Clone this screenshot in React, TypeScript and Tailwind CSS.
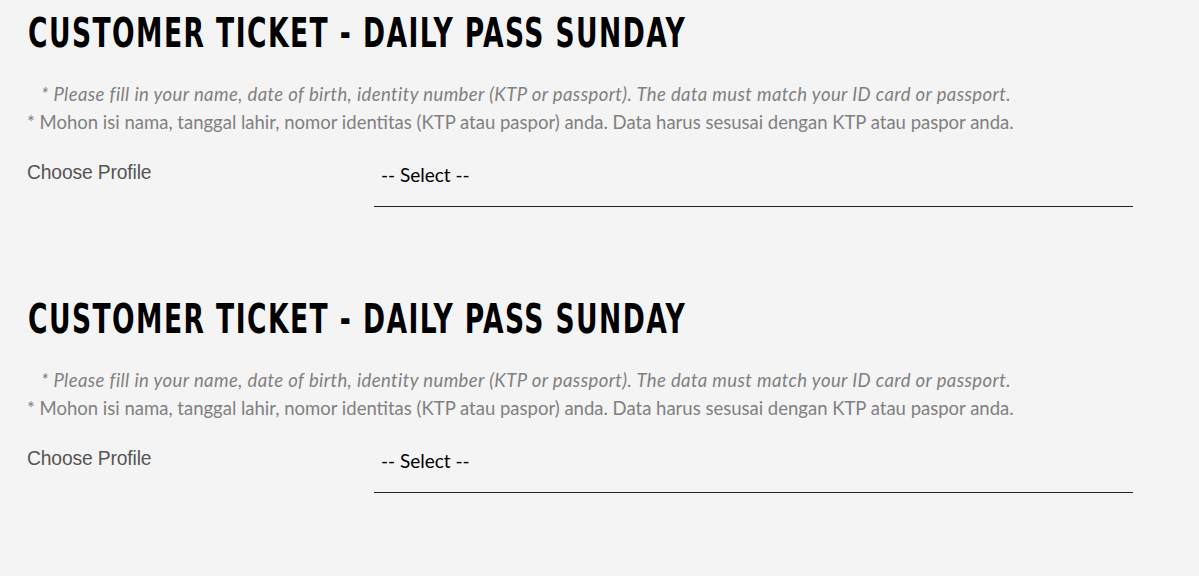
import React from "react";

function Section() {
  return (
    <section className="pb-[79px]">
      <div className="pl-[28px] pt-[8px] h-[57px]">
        <h2
          className="inline-block origin-left scale-x-[0.72] whitespace-nowrap text-[41px] leading-[50px] font-bold uppercase text-black tracking-[2px]"
          style={{ fontFamily: '"DejaVu Sans Condensed", "Liberation Sans", sans-serif' }}
        >
          Customer Ticket - Daily Pass Sunday
        </h2>
      </div>
      <div className="mt-[23px] pl-[27px] text-[18.5px] leading-[28px] text-[#808080]" style={{ fontFamily: "Lato, sans-serif" }}>
        <p className="italic pl-[14px] tracking-[0.4px]">
          * Please fill in your name, date of birth, identity number (KTP or passport). The data must match your ID card or passport.
        </p>
        <p>* Mohon isi nama, tanggal lahir, nomor identitas (KTP atau paspor) anda. Data harus sesusai dengan KTP atau paspor anda.</p>
      </div>
      <div className="mt-[24px] flex pl-[27px]">
        <div
          className="w-[347px] pt-[1px] text-[19.3px] leading-[24px] text-[#555] tracking-[-0.15px]"
          style={{ fontFamily: '"Liberation Sans", Arial, sans-serif' }}
        >
          Choose Profile
        </div>
        <div className="w-[759px] border-b border-[#222] pt-[3px] pb-[19px] pl-[7px] text-[19px] leading-[24px] text-black" style={{ fontFamily: "Lato, sans-serif" }}>
          -- Select --
        </div>
      </div>
    </section>
  );
}

export default function App() {
  return (
    <div className="min-h-[576px] w-[1199px] bg-[#f4f4f4]">
      <Section />
      <Section />
    </div>
  );
}
